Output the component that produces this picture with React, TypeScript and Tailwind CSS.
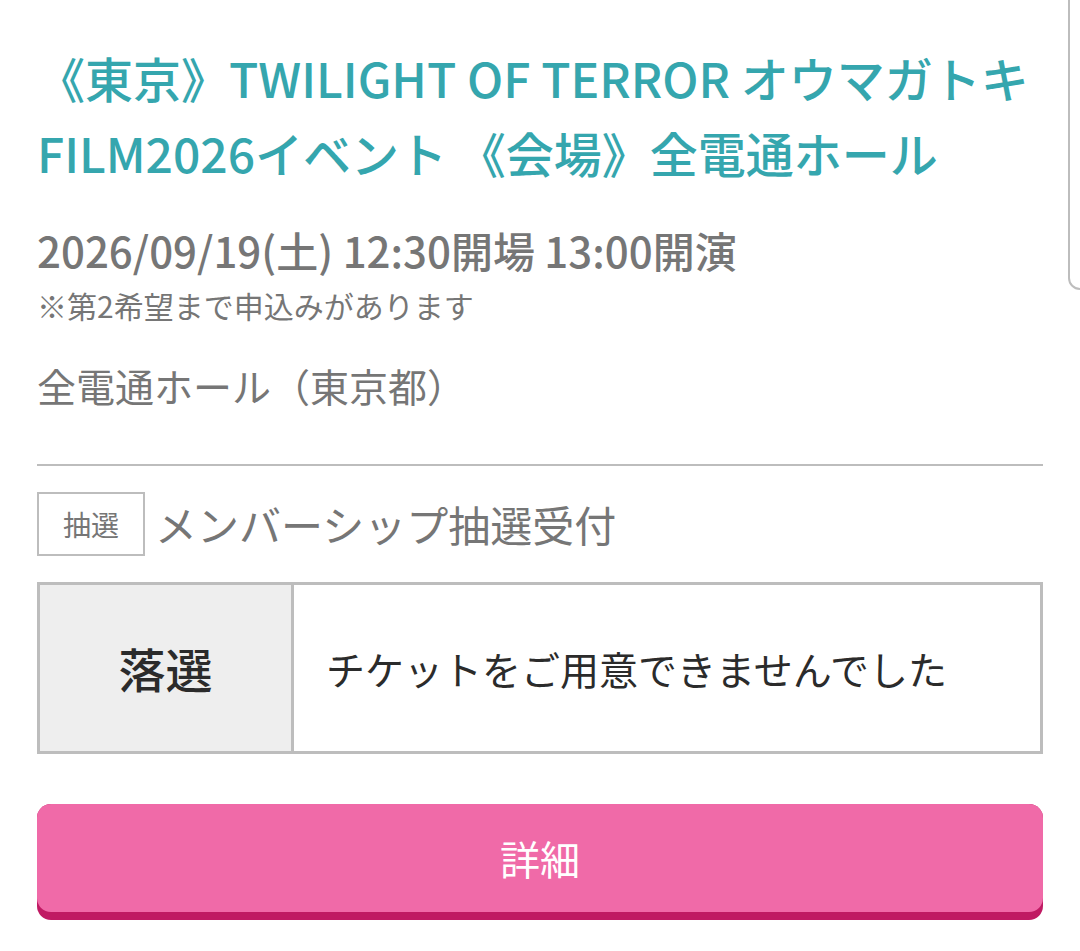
import React from "react";

export default function App() {
  return (
    <div
      className="relative w-[1080px] h-[951px] overflow-hidden bg-white"
      style={{ fontFamily: '"Noto Sans CJK JP", "Noto Sans", sans-serif' }}
    >
      <div className="absolute right-[-20px] top-[-20px] w-[32px] h-[310px] border-2 border-[#bdbdbd] rounded-[12px]" />
      <div className="pl-[37px] pr-[37px] pt-[40px]">
        <h1 className="text-[#35a6ae] text-[48px] leading-[75px] font-medium tracking-[0px]">
          《東京》TWILIGHT OF TERROR オウマガトキFILM2026イベント 《会場》全電通ホール
        </h1>
        <div className="mt-[35px] text-[#767676] text-[42px] leading-[50px] font-medium">
          2026/09/19(土) 12:30開場 13:00開演
        </div>
        <div className="mt-[12px] text-[#767676] text-[30px] leading-[36px]">
          ※第2希望まで申込みがあります
        </div>
        <div className="mt-[37px] text-[#767676] text-[39px] leading-[50px]">
          全電通ホール（東京都）
        </div>
        <div className="mt-[54px] h-[2px] bg-[#bdbdbd]" />
        <div className="mt-[26px] flex items-center gap-[10px]">
          <div className="w-[108px] h-[64px] border-2 border-[#bdbdbd] flex items-center justify-center text-[#767676] text-[28px]">
            抽選
          </div>
          <div className="text-[#767676] text-[42px] leading-[50px]">メンバーシップ抽選受付</div>
        </div>
        <div className="mt-[26px] flex border-[3px] border-[#bdbdbd] h-[172px]">
          <div className="w-[254px] bg-[#eeeeee] border-r-[3px] border-[#bdbdbd] flex items-center justify-center text-[#2b2b2b] text-[47px] font-medium">
            落選
          </div>
          <div className="flex-1 flex items-center pl-[32px] text-[#2b2b2b] text-[39px]">
            チケットをご用意できませんでした
          </div>
        </div>
        <div className="mt-[50px] h-[116px] rounded-[14px] bg-[#c01a63] pb-[8px]">
          <div className="h-full rounded-[14px] bg-[#f06aa8] flex items-center justify-center text-white text-[40px]">
            詳細
          </div>
        </div>
      </div>
    </div>
  );
}
